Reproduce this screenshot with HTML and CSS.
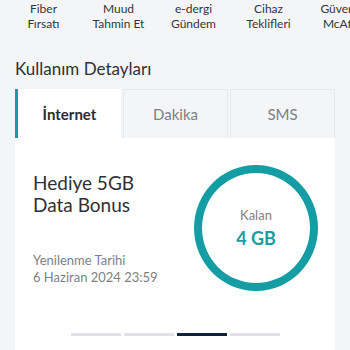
FILE: index.html
```html
<!DOCTYPE html>
<html lang="tr">
<head>
    <meta charset="UTF-8">
    <meta name="viewport" content="width=device-width, initial-scale=1.0">
    <title>Kullanım Detayları</title>
    <link rel="stylesheet" href="styles.css">
</head>
<body>
    <div class="shortcuts">
        <div class="shortcut">Fiber<br>Fırsatı</div>
        <div class="shortcut">Muud<br>Tahmin Et</div>
        <div class="shortcut">e-dergi<br>Gündem</div>
        <div class="shortcut">Cihaz<br>Teklifleri</div>
        <div class="shortcut">Güvenlik<br>McAfee</div>
    </div>

    <h2 class="section-title">Kullanım Detayları</h2>

    <div class="usage">
        <div class="tabs">
            <div class="tab active">İnternet</div>
            <div class="tab">Dakika</div>
            <div class="tab">SMS</div>
        </div>

        <div class="usage-card">
            <div class="usage-row">
                <div class="usage-info">
                    <p class="package-name">Hediye 5GB<br>Data Bonus</p>
                    <p class="renew">Yenilenme Tarihi<br>6 Haziran 2024 23:59</p>
                </div>
                <div class="remaining">
                    <span class="remaining-label">Kalan</span>
                    <span class="remaining-value">4 GB</span>
                </div>
            </div>
            <div class="pager">
                <span class="pager-bar"></span>
                <span class="pager-bar"></span>
                <span class="pager-bar active"></span>
                <span class="pager-bar"></span>
            </div>
        </div>
    </div>
</body>
</html>
```

FILE: styles.css
```css
body {
    font-family: Lato, "Noto Sans", sans-serif;
    background-color: #f4f5f7;
    color: #2f3137;
    margin: 0;
    padding: 0;
    overflow: hidden;
}

.shortcuts {
    display: flex;
    padding: 1px 0 0 6px;
    overflow: hidden;
    white-space: nowrap;
}

.shortcut {
    flex: 0 0 75px;
    text-align: center;
    font-size: 12px;
    line-height: 15px;
    color: #33353b;
}

.section-title {
    font-size: 17px;
    font-weight: 400;
    line-height: 22px;
    margin: 27px 15px 0;
    color: #2f3137;
}

.usage {
    margin: 9px 15px 0;
}

.tabs {
    display: flex;
    gap: 2px;
    height: 49px;
}

.tab {
    flex: 1;
    display: flex;
    align-items: center;
    justify-content: center;
    font-size: 15px;
    color: #7d7f86;
    background-color: #f4f5f7;
    border: 1px solid #e8e9ed;
    border-bottom: none;
}

.tab.active {
    background-color: #fff;
    color: #2a2c32;
    font-weight: 700;
    border: none;
    border-left: 3px solid #149ea3;
}

.usage-card {
    background-color: #fff;
    padding: 27px 18px 40px;
}

.usage-row {
    display: flex;
    justify-content: space-between;
}

.package-name {
    font-size: 19px;
    line-height: 22px;
    margin: 7px 0 0;
    color: #2f3137;
}

.renew {
    font-size: 13px;
    line-height: 17px;
    color: #7d7f86;
    margin: 36px 0 0;
}

.remaining {
    width: 108px;
    height: 110px;
    border: 8px solid #149ea3;
    border-radius: 50%;
    display: flex;
    flex-direction: column;
    align-items: center;
    justify-content: center;
    margin: 0 -1px 0 0;
}

.remaining-label {
    font-size: 13px;
    color: #7d7f86;
}

.remaining-value {
    font-size: 18px;
    font-weight: 700;
    color: #149ea3;
    margin-top: 4px;
}

.pager {
    display: flex;
    justify-content: center;
    gap: 3px;
    margin-top: 42px;
}

.pager-bar {
    width: 50px;
    height: 3px;
    background-color: #e1e2e8;
}

.pager-bar.active {
    background-color: #0d2240;
}
```
